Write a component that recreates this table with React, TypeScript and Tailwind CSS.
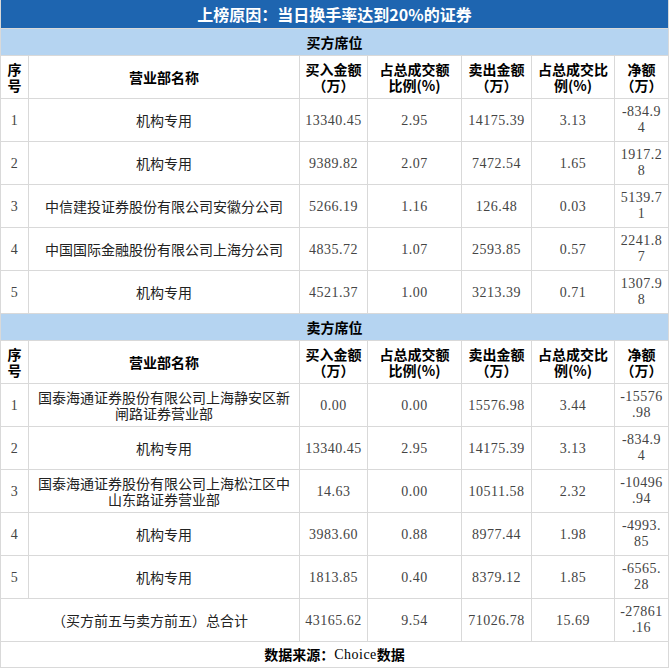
const cjk = "font-['Noto_Sans_CJK_SC',sans-serif]";
const num = "font-['Liberation_Serif','Noto_Sans_CJK_SC',serif] tracking-[0.5px]";
const cols = "grid grid-cols-[28px_271px_68px_94px_70px_83px_54px]";
const cell = "flex items-center justify-center text-center border-r border-b border-[#d9d9d9]";

type Row = [string, string, string, string, string, string, string];

const buyRows: Row[] = [
  ["1", "机构专用", "13340.45", "2.95", "14175.39", "3.13", "-834.94"],
  ["2", "机构专用", "9389.82", "2.07", "7472.54", "1.65", "1917.28"],
  ["3", "中信建投证券股份有限公司安徽分公司", "5266.19", "1.16", "126.48", "0.03", "5139.71"],
  ["4", "中国国际金融股份有限公司上海分公司", "4835.72", "1.07", "2593.85", "0.57", "2241.87"],
  ["5", "机构专用", "4521.37", "1.00", "3213.39", "0.71", "1307.98"],
];

const sellRows: Row[] = [
  ["1", "国泰海通证券股份有限公司上海静安区新闸路证券营业部", "0.00", "0.00", "15576.98", "3.44", "-15576.98"],
  ["2", "机构专用", "13340.45", "2.95", "14175.39", "3.13", "-834.94"],
  ["3", "国泰海通证券股份有限公司上海松江区中山东路证券营业部", "14.63", "0.00", "10511.58", "2.32", "-10496.94"],
  ["4", "机构专用", "3983.60", "0.88", "8977.44", "1.98", "-4993.85"],
  ["5", "机构专用", "1813.85", "0.40", "8379.12", "1.85", "-6565.28"],
];

// net values wrap after 6 characters in the source table
const Net = ({ value }: { value: string }) => (
  <div className={`${cell} ${num} flex-col text-[14px] leading-[16px] text-[#444]`}>
    <span>{value.slice(0, 6)}</span>
    {value.length > 6 && <span>{value.slice(6)}</span>}
  </div>
);

const Header = () => (
  <div className={`${cols} h-[43px] ${cjk} text-[14px] leading-[16px] font-bold text-black`}>
    <div className={cell}>序<br />号</div>
    <div className={cell}>营业部名称</div>
    <div className={cell}>买入金额<br />（万）</div>
    <div className={cell}>占总成交额<br />比例(%)</div>
    <div className={cell}>卖出金额<br />（万）</div>
    <div className={cell}>占总成交比<br />例(%)</div>
    <div className={cell}>净额<br />（万）</div>
  </div>
);

const DataRow = ({ row }: { row: Row }) => (
  <div className={`${cols} h-[43px] text-[14px]`}>
    <div className={`${cell} ${num} text-[#444]`}>{row[0]}</div>
    <div className={`${cell} ${cjk} px-2 leading-[16px] text-[#222]`}>{row[1]}</div>
    <div className={`${cell} ${num} text-[#444]`}>{row[2]}</div>
    <div className={`${cell} ${num} text-[#444]`}>{row[3]}</div>
    <div className={`${cell} ${num} text-[#444]`}>{row[4]}</div>
    <div className={`${cell} ${num} text-[#444]`}>{row[5]}</div>
    <Net value={row[6]} />
  </div>
);

const Section = ({ title, rows }: { title: string; rows: Row[] }) => (
  <>
    <div className={`h-[27px] flex items-center justify-center bg-[#b5d4f1] border-b border-[#d9d9d9] ${cjk} text-[14px] font-bold text-black`}>
      {title}
    </div>
    <Header />
    {rows.map((r, i) => (
      <DataRow key={i} row={r} />
    ))}
  </>
);

export default function App() {
  return (
    <div className="w-[670px] h-[670px] bg-white">
      <div className="w-[669px] border-l border-[#d9d9d9]">
        <div className={`h-[29px] flex items-center justify-center bg-[#1e65b0] border-r border-b border-[#d9d9d9] ${cjk} text-[16px] font-bold text-white`}>
          上榜原因：当日换手率达到20%的证券
        </div>
        <div className="border-r border-[#d9d9d9]">
          <Section title="买方席位" rows={buyRows} />
          <Section title="卖方席位" rows={sellRows} />
        </div>
        <div className={`${cols} h-[43px] text-[14px]`}>
          <div className={`${cell} col-span-2 ${cjk} text-[#222]`}>（买方前五与卖方前五）总合计</div>
          <div className={`${cell} ${num} text-[#444]`}>43165.62</div>
          <div className={`${cell} ${num} text-[#444]`}>9.54</div>
          <div className={`${cell} ${num} text-[#444]`}>71026.78</div>
          <div className={`${cell} ${num} text-[#444]`}>15.69</div>
          <Net value="-27861.16" />
        </div>
        <div className={`h-[26px] flex items-center justify-center border-r border-b border-[#d9d9d9] ${cjk} text-[14px] font-bold text-black`}>
          数据来源：<span className={`${num} font-normal`}>Choice</span>数据
        </div>
      </div>
    </div>
  );
}
